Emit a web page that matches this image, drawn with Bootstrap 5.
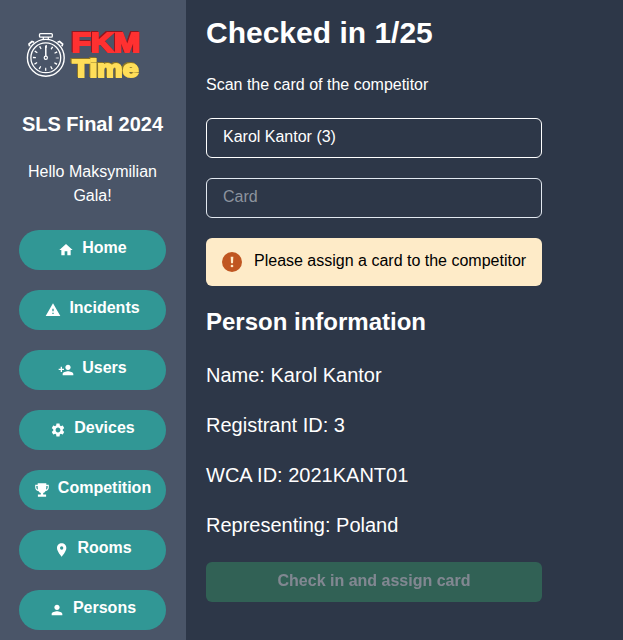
<!DOCTYPE html>
<html lang="en">
<head>
<meta charset="utf-8">
<meta name="viewport" content="width=device-width, initial-scale=1">
<title>FKM Time</title>
<link href="https://cdn.jsdelivr.net/npm/bootstrap@5.3.0/dist/css/bootstrap.min.css" rel="stylesheet">
<style>
body{font-family:"Liberation Sans",Arial,sans-serif;font-size:16px;line-height:24px;background:#2d3748;color:#fff}
.shell{height:640px}
.side{width:186px;background:#4a5568;padding:20px 20px 0 19px}
.logo{height:71px;margin-bottom:20px}
.logo-top{filter:drop-shadow(.7px .7px 0 #8e1720) drop-shadow(-.7px -.7px 0 #8e1720)}
.logo-bottom{filter:drop-shadow(.7px .7px 0 #8a7426) drop-shadow(-.7px -.7px 0 #8a7426)}
.event{font-size:20px;line-height:26px;padding-bottom:4px;margin:0 -10px 20px}
.hello{line-height:24px;margin:-1px 0 22px}
.menu-btn{--bs-btn-bg:#319795;--bs-btn-color:#fff;--bs-btn-hover-bg:#2c7a7b;--bs-btn-hover-color:#fff;height:40px;line-height:24px;border:0;padding:0}
.menu-btn svg{width:16px;height:16px;fill:#fff}
.menu-btn span{padding-bottom:4px}
.stack{gap:20px}
.raise{padding-bottom:2px}
.content{padding:16px 20px 0;width:376px}
h1{font-size:30px;line-height:34px;padding-bottom:4px}
h2{font-size:24px;line-height:32px;padding-bottom:4px}
.scan{line-height:22px;padding-bottom:2px}
.field.form-control{height:40px;background:transparent;border:1px solid #fff;border-radius:6px;color:#fff;padding:0 16px 2px;line-height:24px}
.field.card-no{border-color:#e2e8f0}
.field::placeholder{color:#8c939e;opacity:1}
.notice{height:48px;background:#feebc8;color:#000;border:0;border-radius:6px;padding:0 16px}
.facts{font-size:20px;line-height:26px}
.facts div{padding-bottom:4px}
.assign{--bs-btn-disabled-bg:#38a169;--bs-btn-disabled-color:#fff;--bs-btn-disabled-opacity:.4;height:40px;border:0;border-radius:6px;padding:0 0 2px}
</style>
<script src="https://cdn.jsdelivr.net/npm/bootstrap@5.3.0/dist/js/bootstrap.bundle.min.js"></script>
</head>
<body>
<div class="shell d-flex overflow-hidden">
<aside class="side flex-shrink-0 text-center">
<svg class="logo d-block w-100" viewBox="19 20 147 71">
<g fill="none" stroke="#fff">
<circle cx="45.8" cy="57.8" r="18.4" stroke-width="1.4"/>
<circle cx="45.8" cy="57.8" r="14.9" stroke-width="1.3"/>
<rect x="39.500" y="33.600" width="12.800" height="3.600" rx="1" stroke-width="1.300"/>
<path d="M43.300 37v2.200M48.300 37v2.200" stroke-width="1.300"/>
<path d="M29.600 46.300l-.6-2.200 3-2.600 2.100.8M62 46.300l.6-2.200-3-2.600-2.100.8" stroke-width="1.700"/>
<circle cx="45.8" cy="57.800" r="11.400" stroke-width="3" stroke-dasharray="1.300 4.669" stroke-dashoffset=".65"/>
<path d="M45.800 46v10" stroke-width="1.500"/>
<circle cx="45.800" cy="57.800" r="1.600" stroke-width="1.200"/>
</g>
<g font-family="Liberation Sans,Arial,sans-serif" font-weight="700" stroke-width="1.900">
<text class="logo-top" x="71.800" y="52.300" font-size="27" textLength="68.500" lengthAdjust="spacingAndGlyphs" fill="#ff3131" stroke="#ff3131">FKM</text>
<text class="logo-bottom" x="72.500" y="77" font-size="23.500" textLength="66" lengthAdjust="spacingAndGlyphs" fill="#ffde59" stroke="#ffde59">Time</text>
</g>
</svg>
<div class="event fw-bold text-nowrap">SLS Final 2024</div>
<div class="hello">Hello Maksymilian Gala!</div>
<nav class="d-grid stack">
<a href="#" class="btn menu-btn rounded-pill fw-bold d-flex align-items-center justify-content-center gap-2"><svg viewBox="0 0 24 24"><path d="M10 20v-6h4v6h5v-8h3L12 3 2 12h3v8z"/></svg><span>Home</span></a>
<a href="#" class="btn menu-btn rounded-pill fw-bold d-flex align-items-center justify-content-center gap-2"><svg viewBox="0 0 24 24"><path d="M1 21h22L12 2 1 21zm12-3h-2v-2h2v2zm0-4h-2v-4h2v4z"/></svg><span>Incidents</span></a>
<a href="#" class="btn menu-btn rounded-pill fw-bold d-flex align-items-center justify-content-center gap-2"><svg viewBox="0 0 24 24"><path d="M15 12c2.21 0 4-1.79 4-4s-1.79-4-4-4-4 1.79-4 4 1.79 4 4 4zm-9-2V7H4v3H1v2h3v3h2v-3h3v-2H6zm9 4c-2.67 0-8 1.34-8 4v2h16v-2c0-2.66-5.33-4-8-4z"/></svg><span>Users</span></a>
<a href="#" class="btn menu-btn rounded-pill fw-bold d-flex align-items-center justify-content-center gap-2"><svg viewBox="0 0 24 24"><path d="M19.14 12.94c.04-.3.06-.61.06-.94 0-.32-.02-.64-.07-.94l2.03-1.58a.49.49 0 0 0 .12-.61l-1.92-3.32a.488.488 0 0 0-.59-.22l-2.39.96c-.5-.38-1.03-.7-1.62-.94l-.36-2.54a.484.484 0 0 0-.48-.41h-3.84c-.24 0-.43.17-.47.41l-.36 2.54c-.59.24-1.13.57-1.62.94l-2.39-.96c-.22-.08-.47 0-.59.22L2.74 8.87c-.12.21-.08.47.12.61l2.03 1.58c-.05.3-.09.63-.09.94s.02.64.07.94l-2.03 1.58a.49.49 0 0 0-.12.61l1.92 3.32c.12.22.37.29.59.22l2.39-.96c.5.38 1.03.7 1.62.94l.36 2.54c.05.24.24.41.48.41h3.84c.24 0 .44-.17.47-.41l.36-2.54c.59-.24 1.13-.56 1.62-.94l2.39.96c.22.08.47 0 .59-.22l1.92-3.32c.12-.22.07-.47-.12-.61l-2.01-1.58zM12 15.6c-1.98 0-3.6-1.62-3.6-3.6s1.62-3.6 3.6-3.6 3.6 1.62 3.6 3.6-1.62 3.6-3.6 3.6z"/></svg><span>Devices</span></a>
<a href="#" class="btn menu-btn rounded-pill fw-bold d-flex align-items-center justify-content-center gap-2"><svg viewBox="0 0 16 16"><path d="M3.700 1.300h8.600v1.500h2.500v2.400c0 2.100-1.200 3.500-3.200 3.800-.7 1.300-1.600 1.900-2.400 2.100v1.500H12.100v2.200H3.900v-2.200H6.800v-1.500C6 10.900 5.100 10.300 4.400 9 2.400 8.700 1.200 7.300 1.200 5.200V2.800h2.500zM3.700 4H2.300v1.200c0 1.200.6 2 1.700 2.400-.2-1-.3-2.200-.3-3.600zM12.300 4c0 1.400-.1 2.600-.3 3.600 1.100-.4 1.700-1.200 1.700-2.400V4z"/></svg><span>Competition</span></a>
<a href="#" class="btn menu-btn rounded-pill fw-bold d-flex align-items-center justify-content-center gap-2"><svg viewBox="-1 0 24 24"><path d="M12 2C8.130 2 5 5.130 5 9c0 5.250 7 13 7 13s7-7.750 7-13c0-3.870-3.130-7-7-7zm0 9.500a2.500 2.500 0 0 1 0-5 2.500 2.500 0 0 1 0 5z"/></svg><span>Rooms</span></a>
<a href="#" class="btn menu-btn rounded-pill fw-bold d-flex align-items-center justify-content-center gap-2"><svg viewBox="0 0 24 24"><path d="M12 12c2.210 0 4-1.790 4-4s-1.790-4-4-4-4 1.790-4 4 1.790 4 4 4zm0 2c-2.670 0-8 1.340-8 4v2h16v-2c0-2.660-5.330-4-8-4z"/></svg><span>Persons</span></a>
</nav>
</aside>
<main class="content d-flex flex-column stack">
<h1 class="fw-bold m-0">Checked in 1/25</h1>
<div class="scan">Scan the card of the competitor</div>
<input class="form-control field" value="Karol Kantor (3)" aria-label="Competitor">
<input class="form-control field card-no" placeholder="Card" aria-label="Card">
<div class="alert notice d-flex align-items-center m-0 text-nowrap" role="alert">
<svg class="me-2 flex-shrink-0" width="20" height="20" viewBox="0 0 20 20"><circle cx="10" cy="10" r="10" fill="#c05621"/><path d="M8.700 4.800h2.600l-.3 6.500H9z" fill="#feebc8"/><circle cx="10" cy="14" r="1.350" fill="#feebc8"/></svg>
<span class="raise ms-1">Please assign a card to the competitor</span></div>
<h2 class="fw-bold m-0">Person information</h2>
<div class="facts d-grid stack">
<div>Name: Karol Kantor</div><div>Registrant ID: 3</div><div>WCA ID: 2021KANT01</div><div>Representing: Poland</div>
</div>
<button class="btn assign fw-bold" disabled>Check in and assign card</button>
</main>
</div>
</body>
</html>
